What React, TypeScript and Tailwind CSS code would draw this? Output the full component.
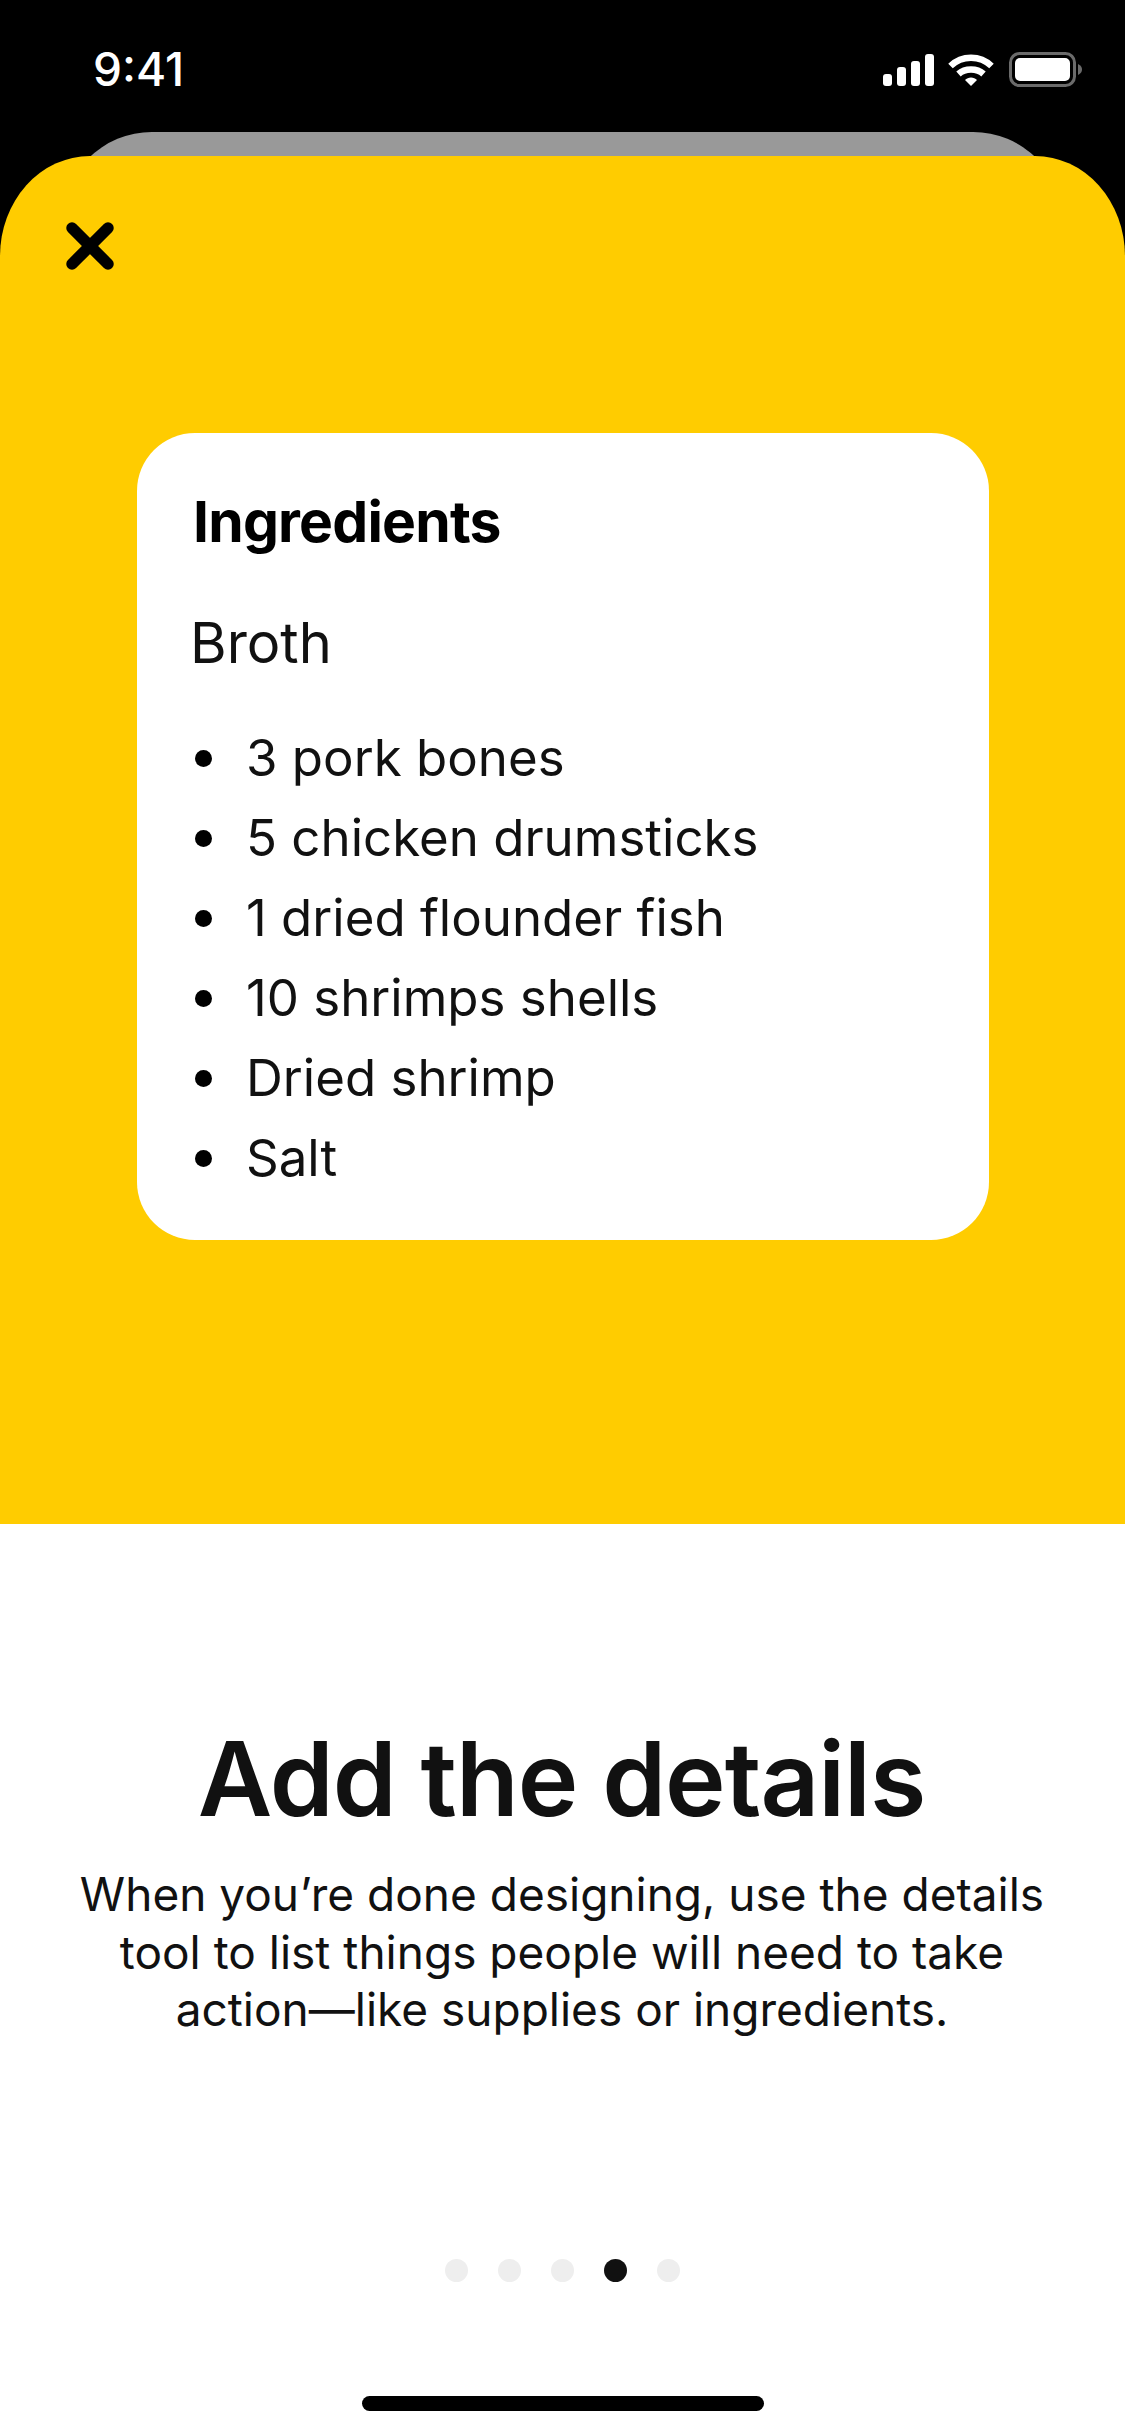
import React from "react";

const items = ["3 pork bones", "5 chicken drumsticks", "1 dried flounder fish", "10 shrimps shells", "Dried shrimp", "Salt"];
const dots = [false, false, false, true, false];

export default function App() {
  return (
    <div className="w-[1125px] h-[2436px] bg-white flex flex-col overflow-hidden font-['Inter',sans-serif]">
      <div className="bg-black">
        <div className="h-[132px] flex items-start justify-between pl-[93px] pr-[43px]">
          <span className="mt-[43px] text-[46px] leading-[52px] font-medium text-white">9:41</span>
          <div className="mt-[52px] flex items-center">
            <svg width="52" height="34" viewBox="0 0 52 34" className="mr-[14px]" fill="#fff">
              <rect x="1" y="21" width="9" height="12" rx="3" />
              <rect x="15" y="14" width="9" height="19" rx="3" />
              <rect x="29" y="8" width="9" height="25" rx="3" />
              <rect x="43" y="1" width="9" height="32" rx="3" />
            </svg>
            <svg width="46" height="34" viewBox="0 0 46 34" className="mr-[15px]" fill="none" stroke="#fff" strokeWidth="6.5">
              <path d="M2.5 13 C14 2 32 2 43.500 13" />
              <path d="M10.500 21 C17 15 29 15 35.500 21" />
              <path d="M17 27 L23 33 L29 27 C26 23.500 20 23.500 17 27 Z" fill="#fff" stroke="none" />
            </svg>
            <svg width="73" height="35" viewBox="0 0 73 35" fill="none">
              <rect x="1.500" y="1.500" width="64" height="32" rx="9" stroke="#6b6b6b" strokeWidth="3" />
              <rect x="6" y="6" width="55" height="23" rx="5" fill="#fff" />
              <path d="M69 12 C72 13.500 73 15.500 73 17.500 C73 19.500 72 21.500 69 23 Z" fill="#6b6b6b" />
            </svg>
          </div>
        </div>
        <div className="mx-[62px] h-[90px] -mb-[66px] rounded-t-[90px] bg-[#999999]" />
        <div className="relative h-[1368px] rounded-tl-[90px_100px] rounded-tr-[90px_100px] bg-[#ffcc00] pt-[66px]">
          <svg width="48" height="48" viewBox="0 0 48 48" className="ml-[66px]" fill="none" stroke="#000" strokeWidth="11.500" strokeLinecap="round">
            <path d="M6 6 L42 42" />
            <path d="M42 6 L6 42" />
          </svg>
          <div className="mt-[163px] ml-[137px] w-[852px] h-[807px] rounded-[58px] bg-white pt-[57px] pl-[53px] text-black">
            <h2 className="ml-[3px] text-[57px] leading-[64px] font-bold tracking-[-0.8px]">Ingredients</h2>
            <p className="mt-[57px] text-[56px] leading-[64px] font-normal text-[#111]">Broth</p>
            <ul className="mt-[43px] flex flex-col">
              {items.map((t) => (
                <li key={t} className="h-[80px] flex items-center text-[#111] text-[51px] leading-[80px] font-normal">
                  <span className="ml-[5px] mr-[34px] w-[17px] h-[17px] rounded-full bg-black shrink-0" />
                  <span>{t}</span>
                </li>
              ))}
            </ul>
          </div>
        </div>
      </div>
      <div className="flex-1 flex flex-col items-center">
        <h1 className="mt-[192px] mr-[2px] text-[102.500px] leading-[126px] font-semibold text-[#111] tracking-[-1px]">Add the details</h1>
        <p className="mt-[24px] mr-[1px] w-[1000px] text-center text-[46px] leading-[57.500px] font-normal text-[#111]">
          When you’re done designing, use the details tool to list things people will need to take action—like supplies or ingredients.
        </p>
        <div className="mt-[220px] flex gap-[30px]">
          {dots.map((on, i) => (
            <span key={i} className={"w-[23px] h-[23px] rounded-full " + (on ? "bg-[#111111]" : "bg-[#eeeeee]")} />
          ))}
        </div>
        <div className="mt-[114px] w-[402px] h-[15px] rounded-full bg-black" />
      </div>
    </div>
  );
}
